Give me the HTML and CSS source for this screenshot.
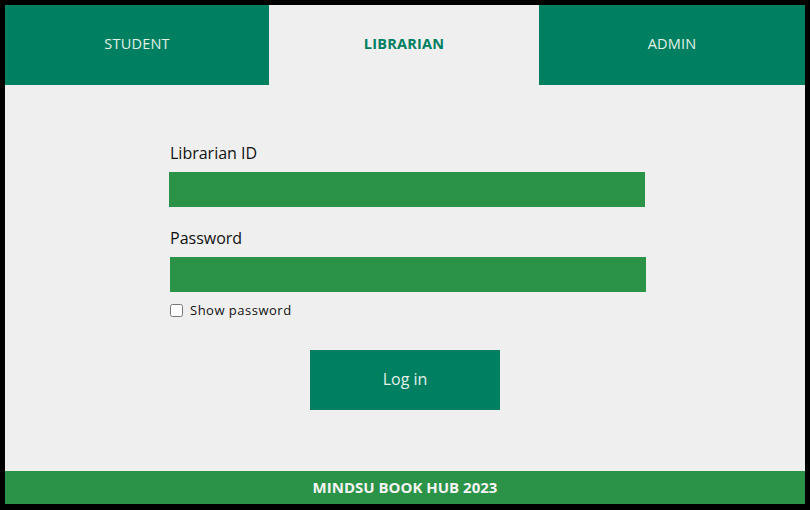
FILE: index.html
```html
<!DOCTYPE html>
<html lang="en">
<head>
<meta charset="utf-8">
<title>MINDSU Book Hub - Librarian Login</title>
<link rel="stylesheet" href="styles.css">
</head>
<body>
<div class="frame">
  <nav class="tabs">
    <a class="tab tab-student">STUDENT</a>
    <a class="tab tab-librarian active">LIBRARIAN</a>
    <a class="tab tab-admin">ADMIN</a>
  </nav>
  <main class="main">
    <form class="form">
      <label class="label label-first" for="lid">Librarian ID</label>
      <input class="field" id="lid" type="text">
      <label class="label label-second" for="pw">Password</label>
      <input class="field field-second" id="pw" type="password">
      <div class="show">
        <input class="check" type="checkbox" id="sp">
        <label class="show-label" for="sp">Show password</label>
      </div>
    </form>
    <button class="login" type="button">Log in</button>
  </main>
  <footer class="footer">MINDSU BOOK HUB 2023</footer>
</div>
</body>
</html>
```
FILE: styles.css
```css
html, body {
  margin: 0;
  padding: 0;
  background: #000;
}
body {
  width: 810px;
  height: 510px;
  padding: 5px 5px 6px 5px;
  box-sizing: border-box;
  font-family: "Open Sans", "Noto Sans", sans-serif;
}
.frame {
  width: 800px;
  height: 499px;
  background: #efefef;
  display: flex;
  flex-direction: column;
}
.tabs {
  display: flex;
  height: 80px;
}
.tab {
  display: flex;
  align-items: center;
  justify-content: center;
  padding-bottom: 4px;
  box-sizing: border-box;
  background: #008060;
  color: #e4efe8;
  font-size: 14.5px;
  letter-spacing: 0.2px;
}
.tab-student { width: 264px; }
.tab-librarian { width: 270px; }
.tab-admin { width: 266px; }
.tab.active {
  background: #efefef;
  color: #008060;
  font-weight: 700;
}
.main {
  flex: 1;
  display: flex;
  flex-direction: column;
}
.form {
  width: 477px;
  margin-left: 164px;
  padding-top: 56px;
  display: flex;
  flex-direction: column;
}
.label {
  font-size: 16px;
  line-height: 24px;
  color: #111;
  padding-left: 1px;
}
.field {
  height: 35px;
  border: none;
  background: #2b9348;
  margin: 7px 0 0 0;
  padding: 0;
  width: 476px;
  box-sizing: border-box;
}
.label-second { margin-top: 19px; }
.field-second { margin-left: 1px; }
.show {
  display: flex;
  align-items: center;
  margin-top: 10px;
  height: 16px;
  padding-left: 1px;
}
.check {
  width: 13px;
  height: 13px;
  margin: 0 7px 0 0;
}
.show-label {
  font-size: 13px;
  letter-spacing: 0.5px;
  color: #111;
  padding-bottom: 1px;
}
.login {
  width: 190px;
  height: 60px;
  margin: 32px auto 0 auto;
  padding: 0 0 2px 0;
  border: none;
  background: #008060;
  color: #e4efe8;
  font-family: "Open Sans", "Noto Sans", sans-serif;
  font-size: 16px;
}
.footer {
  height: 33px;
  padding-bottom: 2px;
  box-sizing: border-box;
  background: #2b9348;
  color: #f4f4f4;
  font-weight: 700;
  font-size: 15px;
  display: flex;
  align-items: center;
  justify-content: center;
  margin-top: auto;
}
```
